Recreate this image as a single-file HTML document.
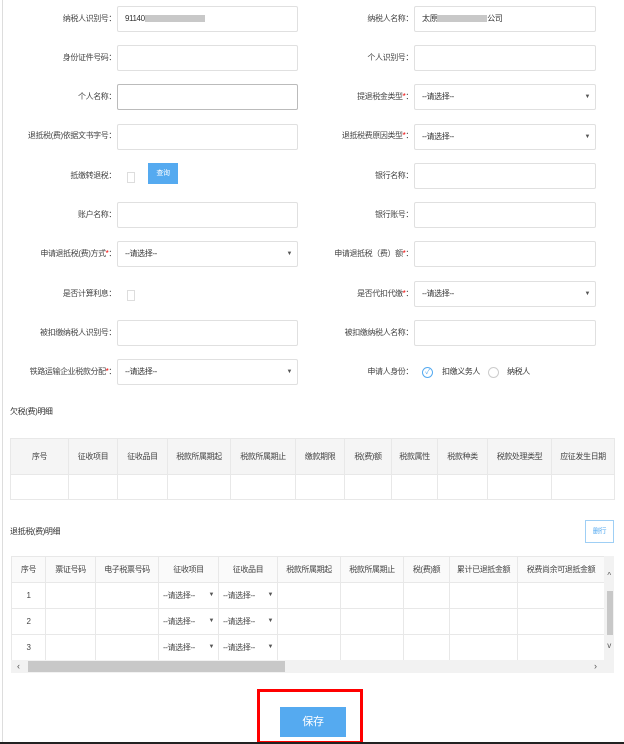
<!DOCTYPE html>
<html><head><meta charset="utf-8"><style>
*{margin:0;padding:0;box-sizing:border-box}
body{width:624px;height:744px;background:#fff;font-family:"Liberation Sans","Noto Sans CJK SC",sans-serif;font-size:8px;letter-spacing:-0.4px;color:#333;position:relative;overflow:hidden}
.a{position:absolute}
.lb{position:absolute;text-align:right;line-height:12px;color:#444}
.lb i{color:#e00;font-style:normal}
.in{position:absolute;height:26px;border:1px solid #e0e0e0;border-radius:2px;background:#fff;line-height:24px;padding-left:7px;color:#333}
.sel::after{content:"▼";position:absolute;right:5px;top:0;font-size:6px;color:#555}
.cb{position:absolute;width:8px;height:11px;border:1px solid #ddd}
table{border-collapse:collapse;position:absolute;table-layout:fixed}
td,th{border:1px solid #e8e8e8;text-align:center;font-weight:normal;color:#444;overflow:hidden;white-space:nowrap}
th{background:#f5f5f5}
.s{position:relative;text-align:left;padding-left:4px}
.s::after{content:"▼";position:absolute;right:4px;font-size:6px;top:9px;color:#555}
</style></head><body>
<div class="a" style="left:2px;top:0;width:1px;height:744px;background:#ddd"></div>

<div class="lb" style="left:0;width:116px;top:13px">纳税人识别号：</div>
<div class="in" style="left:117px;top:6px;width:181px">91140<span style="display:inline-block;width:60px;height:7px;background:#c8c8c8;vertical-align:middle"></span></div>
<div class="lb" style="left:300px;width:113px;top:13px">纳税人名称：</div>
<div class="in" style="left:414px;top:6px;width:182px">太原<span style="display:inline-block;width:50px;height:7px;background:#c8c8c8;vertical-align:middle"></span>公司</div>

<div class="lb" style="left:0;width:116px;top:52px">身份证件号码：</div>
<div class="in" style="left:117px;top:45px;width:181px"></div>
<div class="lb" style="left:300px;width:113px;top:52px">个人识别号：</div>
<div class="in" style="left:414px;top:45px;width:182px"></div>

<div class="lb" style="left:0;width:116px;top:91px">个人名称：</div>
<div class="in" style="left:117px;top:84px;width:181px;border-color:#bbb"></div>
<div class="lb" style="left:300px;width:113px;top:91px">提退税金类型<i>*</i>：</div>
<div class="in sel" style="left:414px;top:84px;width:182px">--请选择--</div>

<div class="lb" style="left:0;width:116px;top:130px">退抵税(费)依据文书字号：</div>
<div class="in" style="left:117px;top:124px;width:181px"></div>
<div class="lb" style="left:300px;width:113px;top:130px">退抵税费原因类型<i>*</i>：</div>
<div class="in sel" style="left:414px;top:124px;width:182px">--请选择--</div>

<div class="lb" style="left:0;width:116px;top:170px">抵缴转退税：</div>
<div class="cb" style="left:127px;top:172px"></div>
<div class="a" style="left:148px;top:163px;width:30px;height:21px;background:#55aaf0;color:#fff;text-align:center;line-height:21px;font-size:7px">查询</div>
<div class="lb" style="left:300px;width:113px;top:170px">银行名称：</div>
<div class="in" style="left:414px;top:163px;width:182px"></div>

<div class="lb" style="left:0;width:116px;top:209px">账户名称：</div>
<div class="in" style="left:117px;top:202px;width:181px"></div>
<div class="lb" style="left:300px;width:113px;top:209px">银行账号：</div>
<div class="in" style="left:414px;top:202px;width:182px"></div>

<div class="lb" style="left:0;width:116px;top:248px">申请退抵税(费)方式<i>*</i>：</div>
<div class="in sel" style="left:117px;top:241px;width:181px">--请选择--</div>
<div class="lb" style="left:300px;width:113px;top:248px">申请退抵税（费）额<i>*</i>：</div>
<div class="in" style="left:414px;top:241px;width:182px"></div>

<div class="lb" style="left:0;width:116px;top:288px">是否计算利息：</div>
<div class="cb" style="left:127px;top:290px"></div>
<div class="lb" style="left:300px;width:113px;top:288px">是否代扣代缴<i>*</i>：</div>
<div class="in sel" style="left:414px;top:281px;width:182px">--请选择--</div>

<div class="lb" style="left:0;width:116px;top:327px">被扣缴纳税人识别号：</div>
<div class="in" style="left:117px;top:320px;width:181px"></div>
<div class="lb" style="left:300px;width:113px;top:327px">被扣缴纳税人名称：</div>
<div class="in" style="left:414px;top:320px;width:182px"></div>

<div class="lb" style="left:0;width:116px;top:366px">铁路运输企业税款分配<i>*</i>：</div>
<div class="in sel" style="left:117px;top:359px;width:181px">--请选择--</div>
<div class="lb" style="left:300px;width:113px;top:366px">申请人身份：</div>
<div class="a" style="left:422px;top:367px;width:11px;height:11px;border:1px solid #55aaf0;border-radius:50%;color:#55aaf0;font-size:7px;line-height:9px;text-align:center">✓</div>
<div class="a" style="left:442px;top:366px;line-height:12px">扣缴义务人</div>
<div class="a" style="left:488px;top:367px;width:11px;height:11px;border:1px solid #ccc;border-radius:50%"></div>
<div class="a" style="left:507px;top:366px;line-height:12px">纳税人</div>

<div class="a" style="left:10px;top:406px;line-height:12px">欠税(费)明细</div>
<table style="left:10px;top:438px;width:604px">
<colgroup><col style="width:58px"><col style="width:49px"><col style="width:50px"><col style="width:63px"><col style="width:65px"><col style="width:49px"><col style="width:47px"><col style="width:46px"><col style="width:50px"><col style="width:64px"><col style="width:63px"></colgroup>
<tr style="height:36px"><th>序号</th><th>征收项目</th><th>征收品目</th><th>税款所属期起</th><th>税款所属期止</th><th>缴款期限</th><th>税(费)额</th><th>税款属性</th><th>税款种类</th><th>税款处理类型</th><th>应征发生日期</th></tr>
<tr style="height:25px"><td></td><td></td><td></td><td></td><td></td><td></td><td></td><td></td><td></td><td></td><td></td></tr>
</table>

<div class="a" style="left:10px;top:526px;line-height:12px">退抵税(费)明细</div>
<div class="a" style="left:585px;top:520px;width:29px;height:23px;border:1px solid #9fcff5;color:#55aaf0;text-align:center;line-height:21px;font-size:7px">删行</div>

<table style="left:11px;top:556px;width:593px">
<colgroup><col style="width:34px"><col style="width:50px"><col style="width:63px"><col style="width:60px"><col style="width:59px"><col style="width:63px"><col style="width:63px"><col style="width:46px"><col style="width:68px"><col style="width:87px"></colgroup>
<tr style="height:26px"><th style="background:#fafafa">序号</th><th style="background:#fafafa">票证号码</th><th style="background:#fafafa">电子税票号码</th><th style="background:#fafafa">征收项目</th><th style="background:#fafafa">征收品目</th><th style="background:#fafafa">税款所属期起</th><th style="background:#fafafa">税款所属期止</th><th style="background:#fafafa">税(费)额</th><th style="background:#fafafa">累计已退抵金额</th><th style="background:#fafafa">税费尚余可退抵金额</th></tr>
<tr style="height:26px"><td>1</td><td></td><td></td><td class="s">--请选择--</td><td class="s">--请选择--</td><td></td><td></td><td></td><td></td><td></td></tr>
<tr style="height:26px"><td>2</td><td></td><td></td><td class="s">--请选择--</td><td class="s">--请选择--</td><td></td><td></td><td></td><td></td><td></td></tr>
<tr style="height:26px"><td>3</td><td></td><td></td><td class="s">--请选择--</td><td class="s">--请选择--</td><td></td><td></td><td></td><td></td><td></td></tr>
</table>
<div class="a" style="left:604px;top:556px;width:10px;height:104px;background:#f2f2f2"></div>
<div class="a" style="left:607px;top:591px;width:6px;height:44px;background:#c8c8c8"></div>
<div class="a" style="left:604px;top:571px;width:10px;font-size:8px;text-align:center;color:#555">^</div>
<div class="a" style="left:604px;top:641px;width:10px;font-size:8px;text-align:center;color:#555">v</div>
<div class="a" style="left:11px;top:660px;width:603px;height:13px;background:#f2f2f2"></div>
<div class="a" style="left:28px;top:661px;width:257px;height:11px;background:#c8c8c8"></div>
<div class="a" style="left:17px;top:660px;font-size:9px;line-height:13px;color:#555">‹</div>
<div class="a" style="left:594px;top:660px;font-size:9px;line-height:13px;color:#555">›</div>

<div class="a" style="left:257px;top:689px;width:106px;height:55px;border:3px solid #f00"></div>
<div class="a" style="left:280px;top:707px;width:66px;height:30px;background:#55aaf0;color:#fff;text-align:center;line-height:30px;font-size:11px">保存</div>
<div class="a" style="left:0;top:742px;width:624px;height:2px;background:#222"></div>
</body></html>
